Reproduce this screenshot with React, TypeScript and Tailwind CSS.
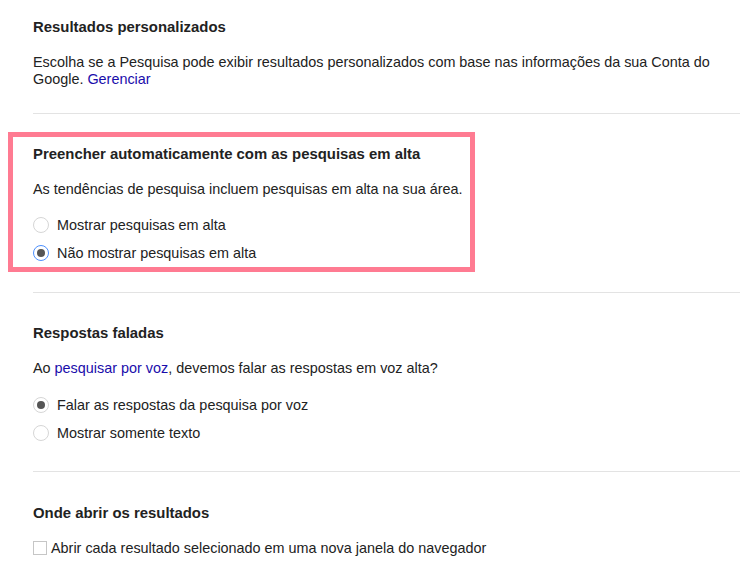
import React from "react";

const font = { fontFamily: '"Liberation Sans", Arial, sans-serif' };

function Radio({ checked, focused, label }: { checked?: boolean; focused?: boolean; label: string }) {
  return (
    <div className="flex h-[28px] items-center gap-[8px]">
      <span
        className={
          "flex h-[16px] w-[16px] items-center justify-center rounded-full border bg-white " +
          (focused ? "border-[#4d90fe]" : "border-[#d6d6d6]")
        }
      >
        {checked && <span className="h-[8px] w-[8px] rounded-full bg-[#555555]" />}
      </span>
      <span className="text-[14.4px] leading-[18px] text-[#222222]">{label}</span>
    </div>
  );
}

export default function App() {
  return (
    <div className="h-[568px] w-[750px] overflow-hidden bg-white pl-[33px] pr-[10px] text-[#222222]" style={font}>
      <div className="pt-[18px]">
        <h3 className="text-[14.9px] font-bold leading-[18px]">Resultados personalizados</h3>
        <p className="mt-[18px] text-[14.4px] leading-[17px]">
          Escolha se a Pesquisa pode exibir resultados personalizados com base nas informações da sua Conta do Google.{" "}
          <span className="text-[#1a0dab]">Gerenciar</span>
        </p>
      </div>
      <div className="mt-[25px] h-px bg-[#e3e3e3]" />

      <div className="-ml-[25px] mt-[18px] w-[467px] border-[5px] border-[#ff7b92] pl-[20px] pt-[8px]">
        <h3 className="text-[14.9px] font-bold leading-[18px]">Preencher automaticamente com as pesquisas em alta</h3>
        <p className="mt-[17px] text-[14.4px] leading-[18px]">As tendências de pesquisa incluem pesquisas em alta na sua área.</p>
        <div className="mt-[13px]">
          <Radio label="Mostrar pesquisas em alta" />
          <Radio checked focused label="Não mostrar pesquisas em alta" />
        </div>
      </div>
      <div className="mt-[20px] h-px bg-[#e3e3e3]" />

      <div className="mt-[31px]">
        <h3 className="text-[14.9px] font-bold leading-[18px]">Respostas faladas</h3>
        <p className="mt-[17px] text-[14.4px] leading-[18px]">
          Ao <span className="text-[#1a0dab]">pesquisar por voz</span>, devemos falar as respostas em voz alta?
        </p>
        <div className="mt-[14px]">
          <Radio checked label="Falar as respostas da pesquisa por voz" />
          <Radio label="Mostrar somente texto" />
        </div>
      </div>
      <div className="mt-[24px] h-px bg-[#e3e3e3]" />

      <div className="mt-[32px]">
        <h3 className="text-[14.9px] font-bold leading-[18px]">Onde abrir os resultados</h3>
        <div className="mt-[17px] flex h-[18px] items-center gap-[4px]">
          <span className="h-[14px] w-[14px] border border-[#c6c6c6] bg-white" />
          <span className="text-[14.4px] leading-[18px]">Abrir cada resultado selecionado em uma nova janela do navegador</span>
        </div>
      </div>
    </div>
  );
}
